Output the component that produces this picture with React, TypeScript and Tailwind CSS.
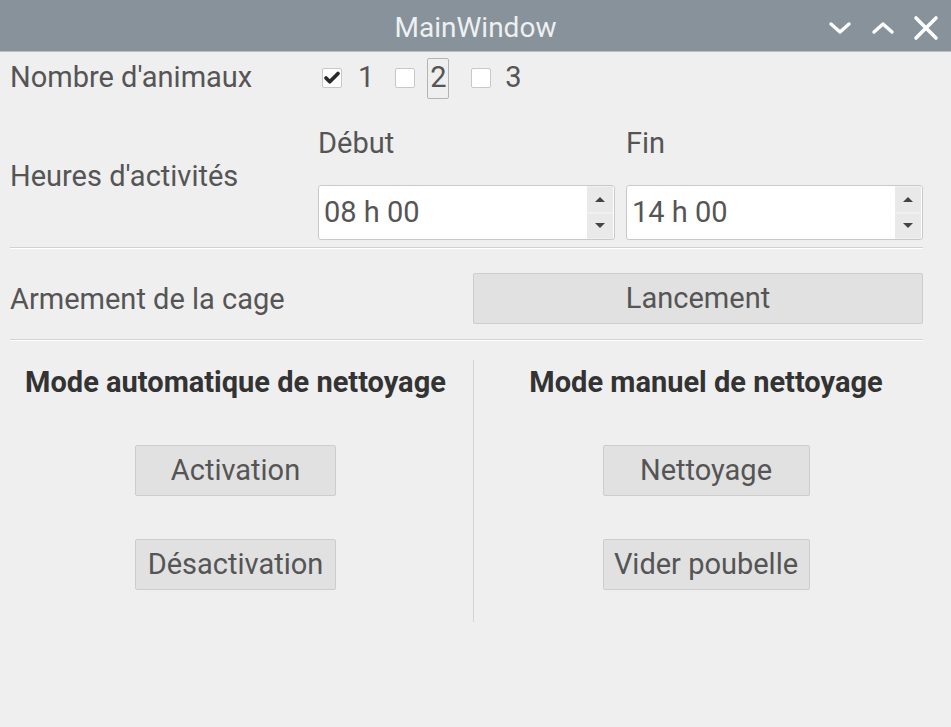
import { Check } from 'lucide-react'

const font = { fontFamily: 'Roboto, "Noto Sans", sans-serif' }

function TitleBar() {
  return (
    <div className="relative flex h-[52px] items-center justify-center border-b border-[#b9c0c5] bg-[#87929a]">
      <span className="pt-[4px] text-[28px] text-[#eef0f1]">MainWindow</span>
      {/* boutons de fenêtre — superposés à droite */}
      <div className="absolute right-[12px] top-0 flex h-full items-center gap-[17px] pt-[4px]">
        <svg width="26" height="26" viewBox="0 0 26 26" fill="none" stroke="#fff" strokeWidth="3.4" strokeLinecap="round" strokeLinejoin="round">
          <path d="M4 9l9 8 9-8" />
        </svg>
        <svg width="26" height="26" viewBox="0 0 26 26" fill="none" stroke="#fff" strokeWidth="3.4" strokeLinecap="round" strokeLinejoin="round">
          <path d="M4 17l9-8 9 8" />
        </svg>
        <svg width="26" height="26" viewBox="0 0 26 26" fill="none" stroke="#fff" strokeWidth="3.6" strokeLinecap="round">
          <path d="M3 3l20 20M23 3L3 23" />
        </svg>
      </div>
    </div>
  )
}

function Box({ checked }: { checked?: boolean }) {
  return (
    <span className="flex h-[20px] w-[20px] items-center justify-center rounded-[2px] border border-[#c8c8c8] bg-white">
      {checked && <Check size={20} strokeWidth={5} className="text-[#2a2a2a]" />}
    </span>
  )
}

function SpinBox({ value }: { value: string }) {
  return (
    <div className="flex h-[55px] w-[297px] rounded-[3px] border border-[#c9c9c9] bg-white">
      <div className="flex flex-1 items-center pl-[5px] text-[29px] text-[#555]">{value}</div>
      <div className="mr-[1px] flex w-[26px] flex-col gap-[2px] bg-[#f0f0f0] py-[1px]">
        <div className="flex flex-1 items-center justify-center bg-[#e9e9e9]">
          <svg width="10" height="5" viewBox="0 0 10 5"><path d="M0 5L5 0l5 5z" fill="#444" /></svg>
        </div>
        <div className="flex flex-1 items-center justify-center bg-[#e9e9e9]">
          <svg width="10" height="5" viewBox="0 0 10 5"><path d="M0 0l5 5 5-5z" fill="#444" /></svg>
        </div>
      </div>
    </div>
  )
}

function Button({ label, className }: { label: string; className: string }) {
  return (
    <button
      type="button"
      className={`flex h-[51px] items-center justify-center rounded-[2px] border border-[#cdcdcd] bg-[#e1e1e1] text-[29px] text-[#555] ${className}`}
    >
      {label}
    </button>
  )
}

function Separator() {
  return (
    <div className="mr-[28px]">
      <div className="h-px bg-[#d2d2d2]" />
      <div className="h-px bg-white" />
    </div>
  )
}

export default function App() {
  return (
    <div className="h-[727px] w-[951px] overflow-hidden bg-[#efefef]" style={font}>
      <TitleBar />
      <div className="pl-[10px]">
        {/* nombre d'animaux */}
        <div className="flex h-[52px] items-center text-[29px] text-[#555]">
          <span className="w-[312px]">Nombre d'animaux</span>
          <Box checked />
          <span className="ml-[16px]">1</span>
          <span className="ml-[21px]"><Box /></span>
          <span className="ml-[12px] flex h-[41px] w-[22px] items-center justify-center rounded-[2px] border border-[#b4b4b4]">2</span>
          <span className="ml-[22px]"><Box /></span>
          <span className="ml-[14px]">3</span>
        </div>

        {/* heures */}
        <div className="flex pt-[16px] text-[29px] text-[#555]">
          <div className="flex w-[308px] items-center pb-[6px]">Heures d'activités</div>
          <div className="flex flex-col">
            <div className="flex h-[48px] items-center">
              <span className="w-[308px]">Début</span>
              <span>Fin</span>
            </div>
            <div className="mt-[17px] flex gap-[11px]">
              <SpinBox value="08 h 00" />
              <SpinBox value="14 h 00" />
            </div>
          </div>
        </div>

        <div className="mt-[7px]">
          <Separator />
        </div>

        {/* armement */}
        <div className="mt-[24px] flex items-center pr-[28px] text-[29px] text-[#555]">
          <span className="w-[463px] pt-[3px]">Armement de la cage</span>
          <Button label="Lancement" className="flex-1" />
        </div>

        <div className="mt-[15px]">
          <Separator />
        </div>

        {/* modes de nettoyage */}
        <div className="mt-[19px] flex">
          <div className="flex w-[451px] flex-col items-center">
            <div className="flex h-[46px] items-center text-[29px] font-bold text-[#333]">Mode automatique de nettoyage</div>
            <Button label="Activation" className="mt-[39px] w-[201px]" />
            <Button label="Désactivation" className="mt-[43px] w-[201px]" />
          </div>
          <div className="ml-[12px] h-[262px] w-px bg-[#d4d4d4]" />
          <div className="flex w-[464px] flex-col items-center">
            <div className="flex h-[46px] items-center text-[29px] font-bold text-[#333]">Mode manuel de nettoyage</div>
            <Button label="Nettoyage" className="mt-[39px] w-[207px]" />
            <Button label="Vider poubelle" className="mt-[43px] w-[207px]" />
          </div>
        </div>
      </div>
    </div>
  )
}
